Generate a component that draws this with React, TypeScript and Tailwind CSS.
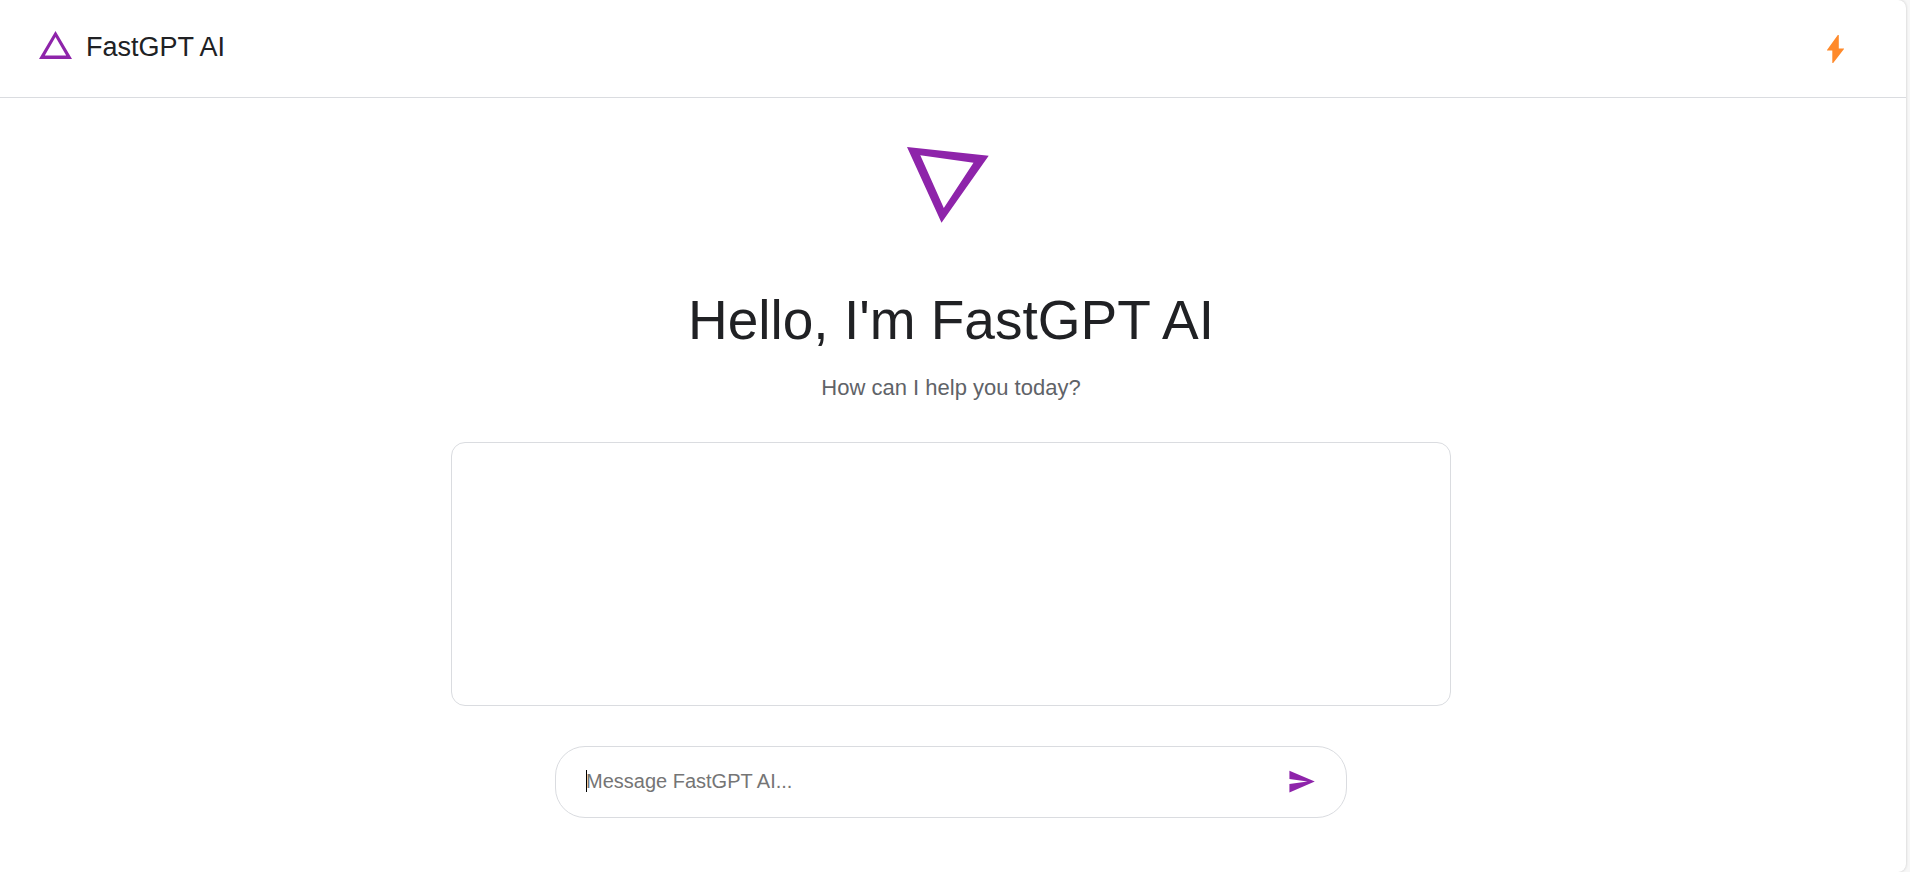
import React from 'react';

function Header() {
  return (
    <header className="flex h-[98px] shrink-0 items-center justify-between border-b border-[#dadce0] pb-1 pl-[39px] pr-[55px]">
      <div className="flex items-center gap-3.5">
        <svg className="mb-1 h-7 w-[33px]" viewBox="0 0 33 28" fill="#8e24aa" fillRule="evenodd" aria-hidden="true">
          <path d="M16.5 0 33 28H0zM16.5 6 5.8 24.6h21.4z" />
        </svg>
        <span className="text-[27px] leading-8">FastGPT AI</span>
      </div>
      <button type="button" aria-label="Boost" className="flex size-8 items-center justify-center pt-1">
        <svg className="h-7 w-[17px]" viewBox="0 0 17 28" fill="#ff8a2b" aria-hidden="true">
          <path d="M10.8 0h1v13.6H17V14L6.2 28h-.9V15.6H0V15z" />
        </svg>
      </button>
    </header>
  );
}

function Composer() {
  return (
    <form
      className="flex h-[72px] w-full max-w-[792px] items-center rounded-[30px] border border-[#dadce0] bg-white px-[30px] pb-0.5"
      onSubmit={(e) => e.preventDefault()}
    >
      <div className="relative flex flex-1 items-center">
        <input
          type="text"
          aria-label="Message FastGPT AI"
          placeholder="Message FastGPT AI..."
          className="w-full bg-transparent text-[20px] leading-6 outline-none placeholder:text-[#757575]"
        />
        <span className="pointer-events-none absolute left-0 h-[22px] w-px bg-black" />
      </div>
      <button type="submit" aria-label="Send">
        <svg className="size-[29px]" viewBox="0 0 24 24" fill="#8e24aa" aria-hidden="true">
          <path d="M2 21 23 12 2 3v7l15 2-15 2v7z" />
        </svg>
      </button>
    </form>
  );
}

export default function App() {
  return (
    <div className="min-h-screen bg-[#f7f7f7] pr-1 font-['Liberation_Sans',Arial,sans-serif] text-[#202124]">
      <div className="flex min-h-screen flex-col rounded-r-lg bg-white shadow-[0_0_3px_rgba(0,0,0,0.2)]">
        <Header />
        <main className="flex flex-col items-center pr-1 pt-[49px]">
          <svg className="mr-1.5 h-[76px] w-[82px]" viewBox="0 0 82 76" fill="#8e24aa" fillRule="evenodd" aria-hidden="true">
            <path d="M0 0 81.7 8.7 34.5 75.8zM13.3 8.2 36.8 61 66.5 15.8z" />
          </svg>
          <h1 className="mt-[65px] text-[55px] leading-16">Hello, I'm FastGPT AI</h1>
          <p className="mt-5 text-[22px] leading-8 text-[#5f6368]">How can I help you today?</p>
          <section aria-label="Conversation" className="mt-[38px] h-[264px] w-full max-w-[1000px] rounded-[14px] border border-[#dadce0]" />
          <div className="mt-10 flex w-full justify-center">
            <Composer />
          </div>
        </main>
      </div>
    </div>
  );
}
